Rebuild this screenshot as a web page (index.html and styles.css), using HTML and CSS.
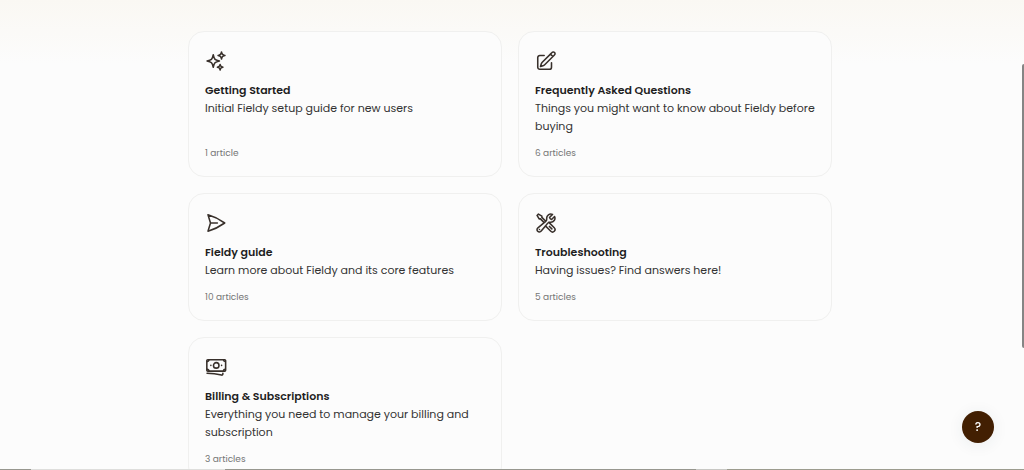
FILE: index.html
```html
<!DOCTYPE html>
<html lang="en">
<head>
    <meta charset="UTF-8">
    <meta name="viewport" content="width=device-width, initial-scale=1.0">
    <title>Fieldy Help Center</title>
    <link rel="stylesheet" href="styles.css">
</head>
<body>
    <main class="collections">
        <a class="card" href="#getting-started">
            <svg class="icon" viewBox="0 0 24 24" aria-hidden="true">
                <path d="M9.8 15.9 9 18.75l-.8-2.85a4.5 4.5 0 0 0-3.1-3.1L2.25 12l2.85-.8a4.5 4.5 0 0 0 3.1-3.1L9 5.25l.8 2.85a4.5 4.5 0 0 0 3.1 3.1l2.85.8-2.85.8a4.5 4.5 0 0 0-3.1 3.1Z"/>
                <path d="M18.26 8.72 18 9.75l-.26-1.03a3.38 3.38 0 0 0-2.46-2.46L14.25 6l1.03-.26a3.38 3.38 0 0 0 2.46-2.46L18 2.25l.26 1.03a3.38 3.38 0 0 0 2.46 2.46l1.03.26-1.03.26a3.38 3.38 0 0 0-2.46 2.46Z"/>
                <path d="m16.9 20.57-.4 1.18-.4-1.18a2.25 2.25 0 0 0-1.42-1.42l-1.18-.4 1.18-.4a2.25 2.25 0 0 0 1.42-1.42l.4-1.18.4 1.18a2.25 2.25 0 0 0 1.42 1.42l1.18.4-1.18.4a2.25 2.25 0 0 0-1.42 1.42Z"/>
            </svg>
            <h2>Getting Started</h2>
            <p>Initial Fieldy setup guide for new users</p>
            <span class="count">1 article</span>
        </a>

        <a class="card" href="#faq">
            <svg class="icon" viewBox="0 0 24 24" aria-hidden="true">
                <path d="m16.86 4.49 1.69-1.69a1.88 1.88 0 1 1 2.65 2.65L10.58 16.07a4.5 4.5 0 0 1-1.9 1.13L6 18l.8-2.69a4.5 4.5 0 0 1 1.13-1.89l8.93-8.93Zm0 0L19.5 7.13"/>
                <path d="M18 14v4.75A2.25 2.25 0 0 1 15.75 21H5.25A2.25 2.25 0 0 1 3 18.75V8.25A2.25 2.25 0 0 1 5.25 6H10"/>
            </svg>
            <h2>Frequently Asked Questions</h2>
            <p>Things you might want to know about Fieldy before buying</p>
            <span class="count">6 articles</span>
        </a>

        <a class="card" href="#guide">
            <svg class="icon" viewBox="0 0 24 24" aria-hidden="true">
                <path d="M6 12 3.27 3.13A59.77 59.77 0 0 1 21.49 12a59.77 59.77 0 0 1-18.22 8.88L6 12Zm0 0h7.5"/>
            </svg>
            <h2>Fieldy guide</h2>
            <p>Learn more about Fieldy and its core features</p>
            <span class="count">10 articles</span>
        </a>

        <a class="card" href="#troubleshooting">
            <svg class="icon" viewBox="0 0 24 24" aria-hidden="true">
                <path d="M11.42 15.17 17.25 21A2.65 2.65 0 0 0 21 17.25l-5.88-5.88M11.42 15.17l2.5-3.03c.32-.38.74-.63 1.2-.77M11.42 15.17l-4.66 5.65a2.55 2.55 0 1 1-3.58-3.59l6.84-5.63m5.1-.23c.55-.16 1.16-.19 1.74-.14a4.5 4.5 0 0 0 4.49-6.34l-3.28 3.28a3 3 0 0 1-2.25-2.25l3.28-3.28a4.5 4.5 0 0 0-6.34 4.49c.09 1.08-.07 2.26-.9 2.95l-.1.08m-1.75 1.44L5.91 7.5H4.5L2.25 3.75l1.5-1.5L7.5 4.5v1.41l4.26 4.25m-1.74 1.44 1.74-1.44m6.62 8.22-2.63-2.63"/>
                <path d="M4.87 19.13h.01"/>
            </svg>
            <h2>Troubleshooting</h2>
            <p>Having issues? Find answers here!</p>
            <span class="count">5 articles</span>
        </a>

        <a class="card" href="#billing">
            <svg class="icon" viewBox="0 0 24 24" aria-hidden="true">
                <rect x="2" y="4" width="20.5" height="12.5" rx="1"/>
                <path d="M2.5 6a1.8 1.8 0 0 0 1.8-1.8M20.2 4.2A1.8 1.8 0 0 0 22 6M2.5 14.5a1.8 1.8 0 0 1 1.8 1.8M20.2 16.3a1.8 1.8 0 0 1 1.8-1.8"/>
                <circle cx="12.25" cy="10.25" r="3"/>
                <path d="M6.4 10.25h.01M18.1 10.25h.01"/>
                <path d="M2.25 18.75a60 60 0 0 1 15.8 2.1c.73.2 1.45-.34 1.45-1.1v-1"/>
            </svg>
            <h2>Billing &amp; Subscriptions</h2>
            <p>Everything you need to manage your billing and subscription</p>
            <span class="count">3 articles</span>
        </a>
    </main>

    <button class="help" type="button" aria-label="Help">?</button>
    <div class="scroll-thumb"></div>
    <div class="bottom-line"></div>
</body>
</html>
```
FILE: styles.css
```css
* {
    box-sizing: border-box;
}
html {
    background-color: #fcfcfc;
    scrollbar-width: none;
}
body {
    margin: 0;
    padding: 31px 20px 40px 16px;
    font-family: Poppins, Inter, sans-serif;
    font-size: 11px;
    line-height: 18px;
    color: #1f1f1f;
    background: linear-gradient(#faf8f3, #fcfcfc 64px);
}
.collections {
    display: grid;
    grid-template-columns: 1fr 1fr;
    gap: 16px;
    max-width: 644px;
    margin: 0 auto;
}
.card {
    display: flex;
    flex-direction: column;
    padding: 18px 16px 15px;
    border: 1px solid #f0f0ef;
    border-radius: 16px;
    background-color: #fcfcfc;
    color: inherit;
    text-decoration: none;
}
.card:hover {
    border-color: #dcdad6;
}
.icon {
    width: 22px;
    height: 22px;
    margin-bottom: 9px;
    fill: none;
    stroke: #38302b;
    stroke-width: 1.7;
    stroke-linecap: round;
    stroke-linejoin: round;
}
.card h2 {
    margin: 0;
    font-size: 11px;
    font-weight: 600;
}
.card p {
    margin: 0 0 10px;
    color: #333;
}
.count {
    margin-top: auto;
    font-size: 9px;
    line-height: 16px;
    color: #757575;
}
.help {
    position: fixed;
    right: 30px;
    bottom: 27px;
    width: 32px;
    height: 32px;
    padding: 0;
    border: none;
    border-radius: 50%;
    background-color: #421f02;
    color: #fff;
    font-family: inherit;
    font-size: 12px;
    font-weight: 500;
    box-shadow: 0 2px 16px rgba(40, 60, 80, 0.08);
    cursor: pointer;
}
.scroll-thumb {
    position: fixed;
    top: 64px;
    right: 0;
    width: 2px;
    height: 284px;
    border-radius: 2px 0 0 2px;
    background-color: #858585;
}
.bottom-line {
    position: fixed;
    left: 0;
    right: 0;
    bottom: 0;
    height: 1px;
    background: linear-gradient(to right, #97978f 3%, #dededc 3% 22%, #97978f 22% 68%, #c8c8c4 68% 71%, #9c9c8e 71%);
}
@media (max-width: 600px) {
    .collections {
        grid-template-columns: 1fr;
    }
}
```
